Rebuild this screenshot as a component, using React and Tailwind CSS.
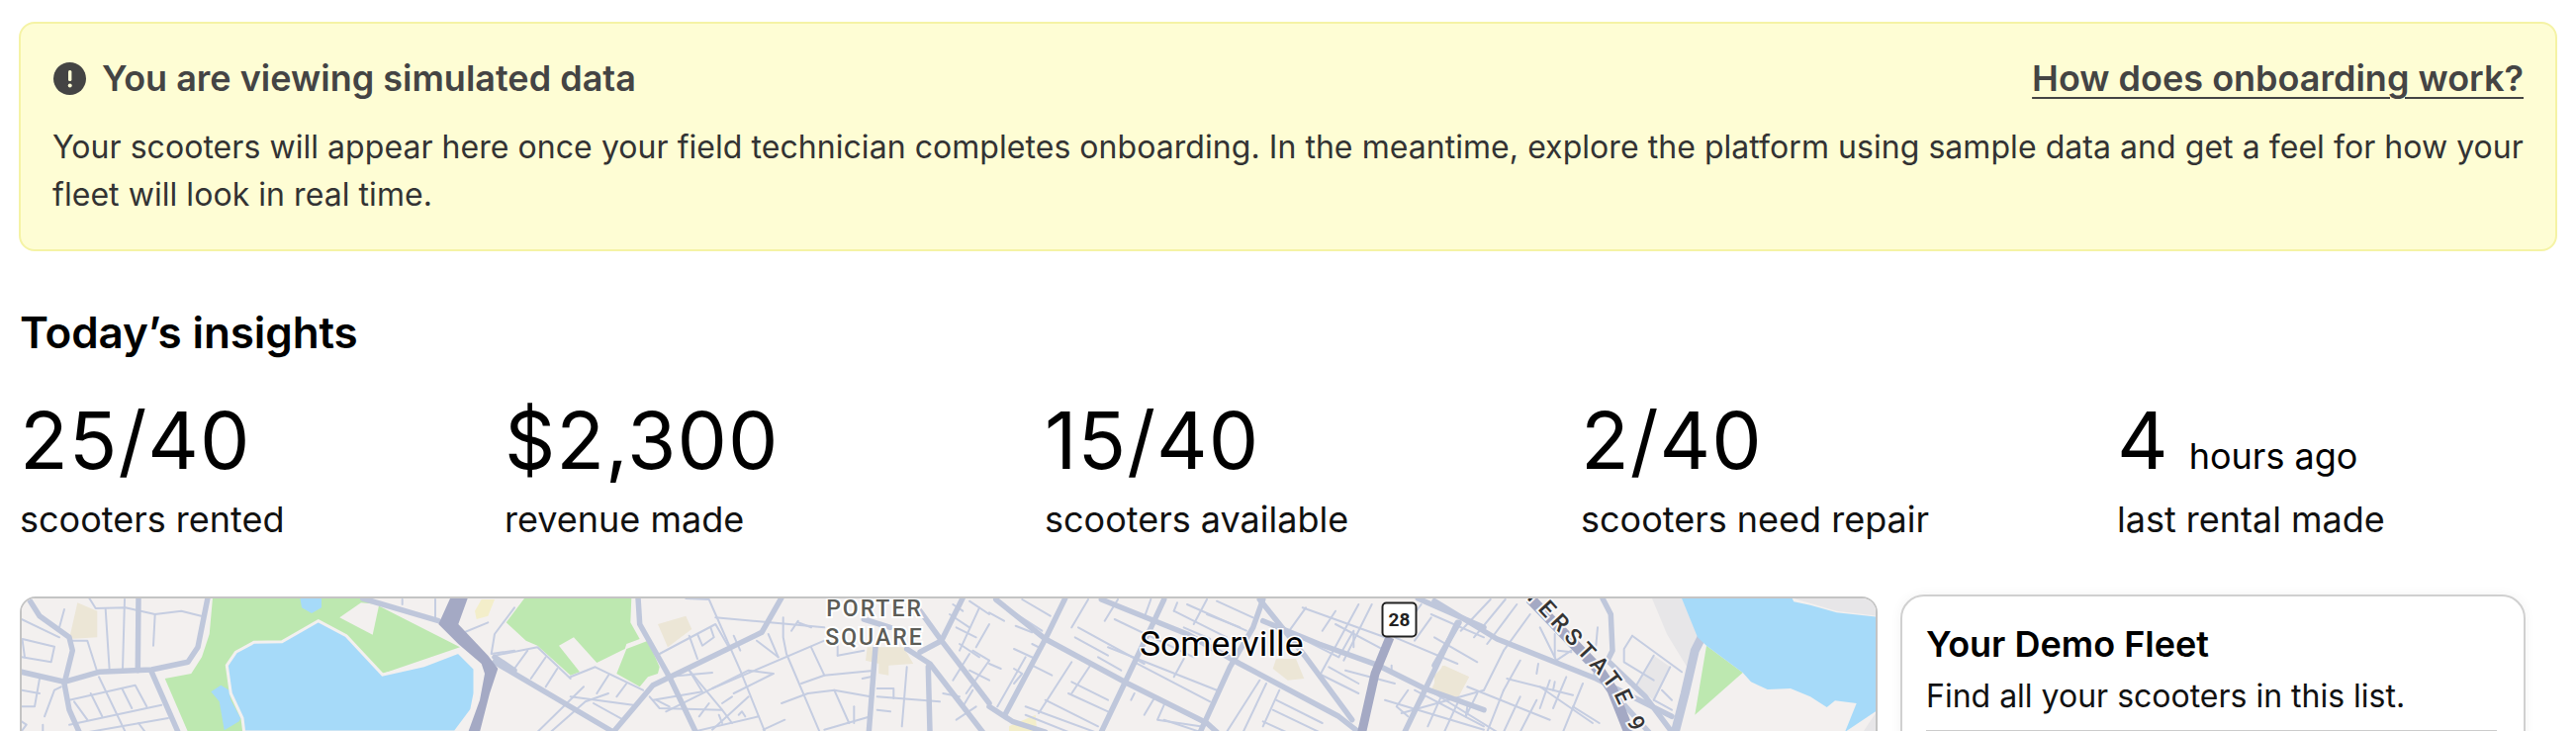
import React from "react";

const P = (base, s) =>
  s.split(" ").map((p) => { const [x, y] = p.split(",").map(Number); return `${(base + x / 3).toFixed(1)},${(600 + y / 3).toFixed(1)}`; }).join(" ");

const MAP = [
  {
    base: 20,
    green: ["585,10 1040,10 1335,160 1100,240 700,300 680,417 510,417 440,255 520,240 552,190 575,120"],
    bg: ["970,70 1035,25 1090,30 1070,122"],
    water: [
      "850,10 915,10 915,40 885,57 855,40",
      "580,295 610,275 635,290 640,320 670,375 665,385 620,412 605,325",
    ],
    beige: ["175,25 235,50 235,130 150,135"],
    dotted: ["1380,50 1400,15 1440,15 1420,65 1385,75"],
    major: [
      "25,10 60,65 150,130 160,170 135,270 150,350 180,417",
      "5,235 135,265 240,235 400,228 510,205 540,160 570,10",
      "360,10 358,230",
      "400,235 480,417",
      "1040,12 1270,80",
      "1440,190 1500,230",
    ],
    minor: [
      "210,10 230,42 320,40 410,60 490,50 550,65", "260,45 272,230", "318,15 312,225", "410,60 405,155",
      "5,75 120,130", "135,45 120,100", "8,135 105,158 95,205 5,190", "8,140 15,190", "160,140 205,140 235,235",
      "240,250 320,417", "150,320 350,275 385,340", "165,325 205,380", "215,300 250,370", "310,285 340,345",
      "150,395 430,335", "210,417 450,375", "70,395 70,417", "60,255 45,340 5,340", "60,300 5,290",
      "125,280 105,290 75,370", "5,385 20,395 5,415", "360,390 380,417", "1260,15 1260,75", "1160,15 1160,30",
      "1335,120 1420,85", "1500,40 1440,120 1430,180 1500,170",
    ],
  },
  {
    base: 500,
    green: [
      "35,85 90,12 415,12 412,85 440,135 400,150 395,165 310,207 240,130 195,155 258,235 230,245 130,155 95,140",
      "370,240 400,165 465,140 500,220 495,240 465,250 440,280",
    ],
    beige: ["495,90 580,65 598,105 525,160", "1130,160 1240,160 1270,210 1195,215 1195,245 1165,240 1165,210 1125,200"],
    major: [
      "435,10 440,90 530,250 610,417", "0,205 360,417", "870,10 810,115 480,275 360,417",
      "1155,160 1135,417", "1120,75 1200,100", "1315,220 1320,417", "1250,165 1320,210 1480,417",
      "1290,50 1355,140 1500,330", "1420,10 1355,140 1290,175",
    ],
    minor: [
      "580,12 650,15 745,230 820,417", "670,70 1000,100", "725,125 745,170", "795,140 860,190", "830,120 860,190",
      "875,70 875,130 885,180 985,415", "660,285 1000,140", "500,180 670,90 710,160", "590,125 615,195",
      "615,120 630,155 665,130 655,100", "960,160 1000,245 1140,232", "930,270 1000,245", "870,330 950,300 1030,290 1140,310",
      "1030,290 1075,390", "1160,285 1210,285 1210,315", "1160,310 1350,325", "1250,220 1235,400", "1160,350 1200,355",
      "1115,255 1140,250", "1000,410 1140,370", "590,230 690,350 720,390", "520,250 660,237", "480,320 630,295 590,230",
      "130,417 270,280", "60,225 100,170", "110,255 155,190", "155,280 190,225", "230,255 130,160 0,185",
      "230,250 305,220 450,290", "230,310 420,335", "345,245 310,300", "400,270 370,310", "300,330 390,380",
      "345,300 275,325 170,417", "470,310 500,345 690,350", "490,320 530,340", "520,355 770,230 845,240", "725,300 845,240",
      "620,370 650,330", "720,310 690,330", "660,410 770,310", "680,365 690,390", "740,365 750,355 760,370",
      "815,410 880,380", "600,417 800,370", "1040,185 1120,170", "1040,150 1040,185", "1090,340 1090,390",
      "1360,300 1410,310", "1400,100 1460,130", "1440,20 1500,60", "1390,30 1420,50", "1460,160 1500,90", "1440,230 1500,260",
      "1420,340 1450,290", "1400,380 1460,340", "900,110 920,80", "920,85 960,100", "1380,60 1440,100", "1410,150 1470,190",
      "1450,170 1500,200", "1390,260 1440,180", "1430,300 1500,200", "1470,40 1410,170",
    ],
  },
  {
    base: 1000,
    beige: ["870,195 930,195 955,255 905,260 860,225", "1375,215 1455,250 1415,325 1340,290"],
    dotted: ["60,400 140,365 145,417 60,417"],
    major: [
      "20,15 170,135 420,270 660,390 690,417", "230,12 170,135 50,360", "340,15 600,120 760,210 1060,370 1120,417",
      "530,15 500,80 410,270 340,417", "830,15 800,100 730,220 640,417", "820,15 960,190 1100,380",
      "830,80 1000,150 1180,215 1320,285 1500,350", "1300,12 1500,100", "1420,85 1260,417", "0,340 70,385 170,417",
    ],
    minor: [
      "100,15 185,65", "60,45 160,110", "0,55 45,80", "80,95 130,115", "130,150 160,165", "75,165 140,195", "0,210 35,225",
      "270,100 470,210", "380,75 620,190", "360,160 690,290", "250,265 360,320", "240,300 360,355", "170,320 330,400",
      "110,340 320,417", "110,365 240,417", "440,280 640,385", "530,380 640,417", "870,320 1010,390", "860,350 1000,417",
      "830,385 900,417", "1030,220 1120,270", "1080,230 1230,270", "1230,130 1420,210", "1340,60 1500,130",
      "1050,90 1200,170", "950,40 1200,130", "900,110 1060,190", "600,30 780,110", "560,50 720,130",
      "250,100 300,15", "350,80 390,15", "470,70 490,15", "560,50 570,25", "620,90 660,15", "910,110 960,40", "1010,110 1050,50",
      "1060,190 1105,110 1105,160", "1120,30 1000,250", "1160,30 1075,200", "1250,110 1310,30", "1340,70 1290,140",
      "1220,215 1220,240", "25,340 110,190", "150,360 250,205", "250,300 310,210", "590,195 560,250", "840,270 770,417",
      "820,260 720,417", "880,290 830,400", "1270,290 1235,340 1270,370", "1370,310 1330,400", "1450,340 1445,370",
      "1320,310 1290,360", "1200,320 1500,410", "500,315 470,365", "530,335 510,380 640,400", "75,225 100,240 75,270", "440,300 430,320",
      "440,205 670,325", "590,100 670,135", "1250,360 1500,290", "1290,290 1500,400", "330,190 400,230", "260,130 360,185",
      "660,60 760,100", "690,20 800,70", "130,215 190,245", "1000,240 1120,300",
    ],
  },
  {
    base: 1450,
    water: ["750,12 1085,12 1090,22 1140,32 1220,55 1340,68 1345,68 1345,350 1245,417 1280,330 1215,322 1190,342 1140,310 1080,285 1010,288 960,265 935,237 825,155 798,130"],
    gray: ["660,12 750,12 800,130 775,235 705,120", "1090,12 1345,12 1345,65 1220,50", "1345,350 1345,417 1300,417", "610,280 665,185 715,220 665,320"],
    green: ["825,155 935,237 790,365"],
    beige: ["0,245 30,215 105,250 65,325 0,300"],
    majorThick: ["870,12 790,170 760,300 730,417"],
    major: ["0,20 190,135 490,255 720,370", "510,12 535,60 540,170 525,200 640,310 720,417", "75,85 0,215", "490,240 650,417"],
    minor: [
      "170,15 80,110", "215,15 120,130", "250,30 160,150", "290,60 210,170", "320,100 370,200", "210,170 150,290", "260,200 210,290",
      "100,280 350,380", "220,255 420,305", "320,280 480,390", "0,300 190,417", "0,130 130,205", "70,330 30,417", "130,300 95,370",
      "210,290 160,417", "260,310 210,417", "310,320 260,417", "350,260 320,345", "400,250 360,345", "450,270 390,417",
      "370,200 415,170", "375,170 415,175", "365,120 365,190", "495,100 490,155", "315,210 310,240", "600,125 575,165 575,205 665,260",
      "600,125 750,235", "665,185 610,280", "715,220 665,320", "690,290 720,320", "665,320 720,350", "365,265 360,290",
      "100,350 95,370", "420,340 500,390",
    ],
  },
];

function MapDrawing() {
  const shape = (fill, key) =>
    MAP.flatMap((m) => (m[key] || []).map((s, i) => <polygon key={`${key}${m.base}${i}`} points={P(m.base, s)} fill={fill} />));
  const line = (key, width, color) =>
    MAP.flatMap((m) =>
      (m[key] || []).map((s, i) => (
        <polyline key={`${key}${m.base}${i}`} points={P(m.base, s)} fill="none" stroke={color} strokeWidth={width} strokeLinejoin="round" strokeLinecap="round" />
      ))
    );
  return (
    <svg width="1874" height="135" viewBox="22 604 1874 135" className="block">
      <rect x="0" y="600" width="2000" height="200" fill="#f3f0ef" />
      {shape("#bde8b0", "green")}
      {shape("#f3f0ef", "bg")}
      {shape("#ece6d6", "beige")}
      {shape("#f3eeca", "dotted")}
      {shape("#e7e6e8", "gray")}
      {line("minor", 2, "#c5cde1")}
      {line("major", 5.5, "#bfc7db")}
      {line("majorThick", 9, "#bfc7db")}
      {shape("#a6daf9", "water")}
      <polygon
        points={P(20, "905,80 990,125 1100,243 1225,215 1330,175 1380,225 1380,300 1370,350 1320,417 680,417 675,375 640,300 628,215 655,175 710,145 795,143")}
        fill="#a6daf9" stroke="#f3f0ef" strokeWidth="3"
      />
      <polygon
        points={P(20, "1305,12 1358,12 1330,90 1420,185 1450,225 1425,300 1395,417 1360,417 1395,320 1410,240 1400,210 1330,150 1270,90")}
        fill="#a4a9c4"
      />
      <polyline points={P(1000, "1215,130 1170,240 1130,417")} fill="none" stroke="#a4a9c4" strokeWidth="9" />
      <polyline points={P(1450, "290,12 500,230 540,290 590,417")} fill="none" stroke="#a4a9c4" strokeWidth="11" />
      <path id="i93" d="M1525,586 L1552,613 L1618,684 L1633,704 L1650,740 L1670,800" fill="none" />
      <text fontFamily="Roboto, sans-serif" fontSize="23" fontWeight="500" fill="#333" letterSpacing="5.5" stroke="#f7f6f7" strokeWidth="4" paintOrder="stroke">
        <textPath href="#i93" startOffset="0">NTERSTATE 93</textPath>
      </text>
      <text fontFamily="Roboto, sans-serif" fontSize="23" fontWeight="500" fill="#5c5c56" letterSpacing="2" stroke="#fff" strokeWidth="4" paintOrder="stroke" textAnchor="middle" x="884" y="622">PORTER</text>
      <text fontFamily="Roboto, sans-serif" fontSize="23" fontWeight="500" fill="#5c5c56" letterSpacing="2" stroke="#fff" strokeWidth="4" paintOrder="stroke" textAnchor="middle" x="884" y="651">SQUARE</text>
      <text fontFamily="Roboto, sans-serif" fontSize="35.5" fill="#000" stroke="#fff" strokeWidth="3" paintOrder="stroke" x="1152" y="662">Somerville</text>
      <rect x="1397.5" y="608.5" width="34" height="34" rx="4" fill="#fff" stroke="#222" strokeWidth="2" />
      <text fontFamily="Roboto, sans-serif" fontSize="19" fontWeight="700" fill="#222" textAnchor="middle" x="1414.5" y="632">28</text>
    </svg>
  );
}

function Stat({ value, suffix, label, className }) {
  return (
    <div className={className}>
      <div className="h-[105px] text-[80px] leading-[104px] text-black tracking-[1px]">
        {value}
        {suffix && <span className="ml-[20px] text-[36px] leading-none tracking-normal">{suffix}</span>}
      </div>
      <div className="text-[36px] leading-[54px] text-[#111]">{label}</div>
    </div>
  );
}

export default function App() {
  return (
    <div className="h-[739px] w-[2604px] overflow-hidden bg-white font-['Inter',sans-serif]">
      <div className="ml-[19px] mt-[22px] h-[232px] w-[2566px] rounded-[16px] border-2 border-[#f5f3a5] bg-[#fefdd4] px-[32px] pt-[28px]">
        <div className="flex items-center justify-between">
          <div className="ml-[1px] flex items-center gap-[16px]">
            <svg width="33" height="33" viewBox="0 0 33 33">
              <circle cx="16.5" cy="16.5" r="16.5" fill="#444444" />
              <rect x="15" y="8" width="3.4" height="11" rx="1.5" fill="#fefdd4" />
              <circle cx="16.7" cy="23.5" r="2" fill="#fefdd4" />
            </svg>
            <span className="text-[36px] leading-[54px] font-semibold text-[#444444]">You are viewing simulated data</span>
          </div>
          <a className="text-[36px] leading-[54px] font-semibold text-[#444444] underline decoration-2 underline-offset-[6px]">How does onboarding work?</a>
        </div>
        <p className="mt-[19px] text-[32px] leading-[48px] tracking-[0.05px] text-[#333333]">
          Your scooters will appear here once your field technician completes onboarding. In the meantime, explore the platform using sample data and get a feel for how your fleet will look in real time.
        </p>
      </div>
      <h2 className="ml-[20px] mt-[54px] text-[44px] leading-[56px] font-semibold tracking-[-0.1px] text-black">Today’s insights</h2>
      <div className="ml-[20px] mt-[29px] flex">
        <Stat className="w-[490px]" value="25/40" label="scooters rented" />
        <Stat className="w-[546px]" value="$2,300" label="revenue made" />
        <Stat className="w-[542px]" value="15/40" label="scooters available" />
        <Stat className="w-[542px]" value="2/40" label="scooters need repair" />
        <Stat value="4" suffix="hours ago" label="last rental made" />
      </div>
      <div className="ml-[20px] mt-[49px] flex items-start gap-[23px]">
        <div className="mt-[2px] h-[300px] w-[1878px] overflow-hidden rounded-[16px] border-2 border-[#c4c4c4]">
          <MapDrawing />
        </div>
        <div className="h-[300px] w-[632px] rounded-[24px] border-2 border-[#d0d0d0] bg-white pl-[24px] pr-[27px] pt-[20px] shadow-[0_0_12px_rgba(0,0,0,0.05)]">
          <h3 className="text-[36px] leading-[57px] font-semibold text-black">Your Demo Fleet</h3>
          <p className="text-[32px] leading-[48px] text-[#111]">Find all your scooters in this list.</p>
          <div className="mt-[10px] border-t-2 border-[#cccccc]" />
        </div>
      </div>
    </div>
  );
}
